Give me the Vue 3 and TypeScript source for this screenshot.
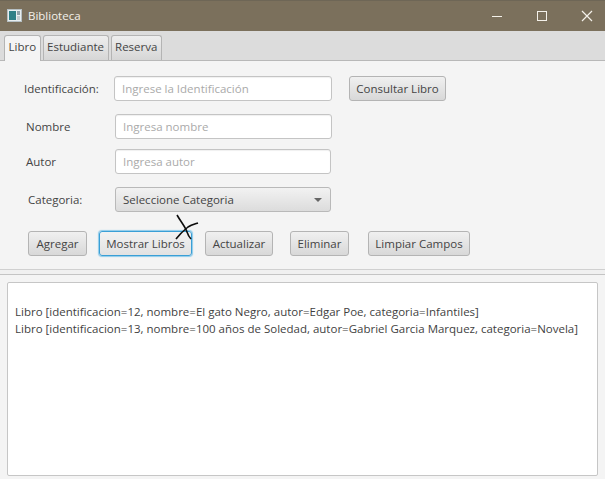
<template>
  <div class="window">
    <header class="titlebar">
      <svg class="app-icon" width="15" height="13" viewBox="0 0 15 13">
        <rect x="0.5" y="0.5" width="14" height="12" fill="#e8eef0" stroke="#b6c0c4" />
        <rect x="2" y="2" width="7" height="9" fill="#2f7f86" />
        <rect x="10" y="2" width="3" height="4" fill="#8fa0a8" />
        <rect x="10" y="7" width="3" height="4" fill="#c4ccd0" />
      </svg>
      <span class="title">Biblioteca</span>
      <div class="controls">
        <svg width="12" height="12" viewBox="0 0 12 12"><path d="M1 6.5h10" stroke="#f4f1ea" fill="none" /></svg>
        <svg width="12" height="12" viewBox="0 0 12 12"><rect x="1.5" y="1.5" width="9" height="9" stroke="#f4f1ea" fill="none" /></svg>
        <svg width="12" height="12" viewBox="0 0 12 12"><path d="M1 1l10 10M11 1L1 11" stroke="#f4f1ea" stroke-width="1.2" fill="none" /></svg>
      </div>
    </header>

    <nav class="tabs">
      <div
        v-for="(tab, index) in tabs"
        :key="tab"
        class="tab"
        :class="{ active: index === 0 }"
      >
        {{ tab }}
      </div>
    </nav>

    <section class="form">
      <div class="row row-id">
        <label class="label">Identificación:</label>
        <div class="input input-id">Ingrese la Identificación</div>
        <button class="btn consult">Consultar Libro</button>
      </div>
      <div class="row row-name">
        <label class="label">Nombre</label>
        <div class="input input-name">Ingresa nombre</div>
      </div>
      <div class="row row-author">
        <label class="label">Autor</label>
        <div class="input input-author">Ingresa autor</div>
      </div>
      <div class="row row-cat">
        <label class="label">Categoria:</label>
        <div class="select">
          <span>Seleccione Categoria</span>
          <i class="arrow"></i>
        </div>
      </div>
      <div class="actions">
        <button class="btn agregar">Agregar</button>
        <div class="marked">
          <button class="btn focused">Mostrar Libros</button>
          <svg class="pen" width="26" height="28" viewBox="0 0 26 28">
            <path d="M2 1c4 7 8 11 10 17 1 3 2 5 4 7" stroke="#0d0d0d" stroke-width="1.6" fill="none" />
            <path d="M1 25c3-4 7-8 12-12 3-2 7-3 10-4" stroke="#0d0d0d" stroke-width="1.6" fill="none" />
          </svg>
        </div>
        <button class="btn actualizar">Actualizar</button>
        <button class="btn eliminar">Eliminar</button>
        <button class="btn limpiar">Limpiar Campos</button>
      </div>
    </section>

    <div class="divider"></div>

    <section class="output-pane">
      <div class="output">
        <p v-for="line in lines" :key="line">{{ line }}</p>
      </div>
    </section>
  </div>
</template>

<script setup lang="ts">
const tabs: string[] = ["Libro", "Estudiante", "Reserva"];

const lines: string[] = [
  "Libro [identificacion=12, nombre=El gato Negro, autor=Edgar Poe, categoria=Infantiles]",
  "Libro [identificacion=13, nombre=100 años de Soledad, autor=Gabriel Garcia Marquez, categoria=Novela]",
];
</script>

<style>
html,
body {
  margin: 0;
  background: #f4f4f4;
}
</style>

<style scoped>
.window {
  width: 605px;
  height: 479px;
  overflow: hidden;
  display: flex;
  flex-direction: column;
  background: #f4f4f4;
  font-family: "Open Sans", "Noto Sans", sans-serif;
  font-size: 11.5px;
  color: #444;
}

.titlebar {
  height: 31px;
  flex: none;
  box-sizing: border-box;
  display: flex;
  align-items: center;
  padding: 0 0 1px 7px;
  background: #7b705c;
  border-top: 1px solid #6e6656;
  color: #f4f1ea;
}
.title {
  margin-left: 6px;
}
.controls {
  margin-left: auto;
  display: flex;
  gap: 33px;
  padding-right: 12px;
}

.tabs {
  height: 30px;
  flex: none;
  box-sizing: border-box;
  display: flex;
  align-items: flex-end;
  gap: 2px;
  padding-left: 4px;
  background: #dcdcdc;
  border-bottom: 1px solid #b8b8b8;
}
.tab {
  height: 25px;
  box-sizing: border-box;
  padding: 0 3.5px;
  line-height: 22px;
  border: 1px solid #b4b4b4;
  border-bottom: none;
  border-radius: 3px 3px 0 0;
  background: linear-gradient(#eeeeee, #d6d6d6);
}
.tab.active {
  background: #f4f4f4;
  margin-bottom: -1px;
  height: 26px;
}

.form {
  height: 208px;
  flex: none;
  box-sizing: border-box;
  display: flex;
  flex-direction: column;
}
.row {
  display: flex;
  align-items: center;
}
.label {
  flex: none;
}
.row-id {
  margin-top: 15px;
  padding-left: 24px;
}
.row-id .label {
  width: 90px;
}
.row-name {
  margin-top: 13px;
  padding-left: 26px;
}
.row-name .label,
.row-author .label {
  width: 89px;
}
.row-author {
  margin-top: 10px;
  padding-left: 26px;
}
.row-cat {
  margin-top: 13px;
  padding-left: 28px;
}
.row-cat .label {
  width: 87px;
}

.input {
  box-sizing: border-box;
  height: 25px;
  padding: 0 7px;
  line-height: 23px;
  background: #fff;
  border: 1px solid #c4c4c4;
  border-radius: 3px;
  color: #aaa;
  box-shadow: inset 0 1px 1px #f0f0f0;
}
.input-id {
  width: 218px;
}
.input-name {
  width: 217px;
}
.input-author {
  width: 216px;
}

.select {
  box-sizing: border-box;
  width: 216px;
  height: 25px;
  padding: 0 8px 0 7px;
  display: flex;
  align-items: center;
  justify-content: space-between;
  border: 1px solid #b9b9b9;
  border-radius: 3px;
  background: linear-gradient(#f2f2f2, #dcdcdc);
}
.arrow {
  width: 0;
  height: 0;
  border-left: 4px solid transparent;
  border-right: 4px solid transparent;
  border-top: 4px solid #666;
}

.btn {
  box-sizing: border-box;
  height: 25px;
  padding: 0;
  font: inherit;
  color: #444;
  white-space: nowrap;
  border: 1px solid #b4b4b4;
  border-radius: 3px;
  background: linear-gradient(#f0f0f0, #d8d8d8);
}
.consult {
  margin-left: 17px;
  width: 97px;
}
.actions {
  margin-top: 19px;
  padding-left: 28px;
  display: flex;
}
.agregar {
  width: 59px;
}
.marked {
  position: relative;
  margin-left: 12px;
}
.focused {
  display: block;
  width: 93px;
  border-color: #3a9fd6;
  box-shadow: 0 0 1px 1px #8ecbea;
  background: linear-gradient(#f2f2f2, #e2e2e2);
}
.pen {
  position: absolute;
  left: 76px;
  top: -17px;
}
.actualizar {
  margin-left: 13px;
  width: 68px;
}
.eliminar {
  margin-left: 17px;
  width: 59px;
}
.limpiar {
  margin-left: 19px;
  width: 102px;
}

.divider {
  height: 6px;
  flex: none;
  box-sizing: border-box;
  border-top: 1px solid #d0d0d0;
  border-bottom: 1px solid #c4c4c4;
  background: #f0f0f0;
}

.output-pane {
  flex: 1;
  padding: 7px 7px 3px 7px;
  min-height: 0;
  display: flex;
}
.output {
  flex: 1;
  box-sizing: border-box;
  padding: 20px 7px 0;
  background: #fff;
  border: 1px solid #c6c6c6;
  border-radius: 2px;
  line-height: 17px;
  color: #3f3f3f;
}
.output p {
  margin: 0;
  white-space: nowrap;
}
</style>
